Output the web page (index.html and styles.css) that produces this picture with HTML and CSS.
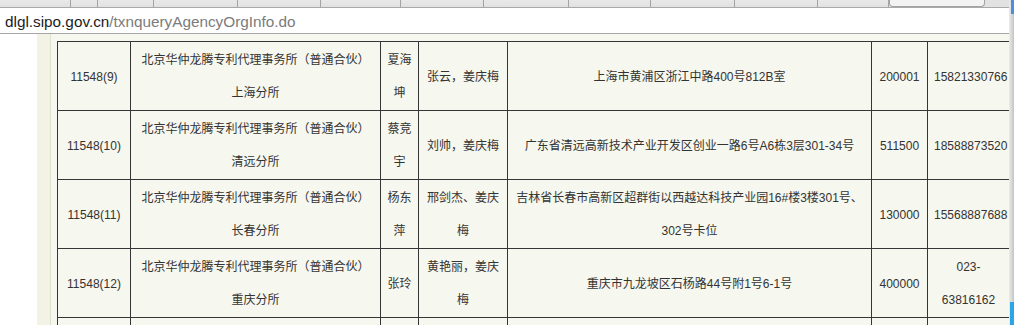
FILE: index.html
```html
<!DOCTYPE html>
<html lang="zh-CN">
<head>
<meta charset="utf-8">
<title>txnqueryAgencyOrgInfo</title>
<link rel="stylesheet" href="styles.css">
</head>
<body>
<div class="tabs">
  <div class="tab t1"></div>
  <div class="tab t2"></div>
  <div class="tab t3"></div>
  <div class="tab t4"></div>
  <div class="tab t5"></div>
  <div class="tab t6"></div>
  <div class="tab t7"></div>
  <div class="tab t8"></div>
  <div class="tab t9"></div>
  <div class="tab t10"></div>
  <div class="tab t11"></div>
  <div class="tab t12"></div>
  <div class="tab-active"></div>
  <div class="tab-rest"></div>
</div>
<div class="addr"><span class="host">dlgl.sipo.gov.cn</span><span class="path">/txnqueryAgencyOrgInfo.do</span></div>
<div class="page">
  <div class="gutter"></div>
  <div class="strip"></div>
  <div class="content">
    <table class="grid">
      <colgroup>
        <col class="c-no">
        <col class="c-name">
        <col class="c-head">
        <col class="c-agent">
        <col class="c-addr">
        <col class="c-zip">
        <col class="c-tel">
      </colgroup>
      <tbody>
        <tr>
          <td>11548(9)</td>
          <td>北京华仲龙腾专利代理事务所（普通合伙）<br>上海分所</td>
          <td>夏海坤</td>
          <td>张云，姜庆梅</td>
          <td>上海市黄浦区浙江中路400号812B室</td>
          <td>200001</td>
          <td>15821330766</td>
        </tr>
        <tr>
          <td>11548(10)</td>
          <td>北京华仲龙腾专利代理事务所（普通合伙）<br>清远分所</td>
          <td>蔡竞宇</td>
          <td>刘帅，姜庆梅</td>
          <td>广东省清远高新技术产业开发区创业一路6号A6栋3层301-34号</td>
          <td>511500</td>
          <td>18588873520</td>
        </tr>
        <tr>
          <td>11548(11)</td>
          <td>北京华仲龙腾专利代理事务所（普通合伙）<br>长春分所</td>
          <td>杨东萍</td>
          <td>邢剑杰、姜庆梅</td>
          <td>吉林省长春市高新区超群街以西越达科技产业园16#楼3楼301号、302号卡位</td>
          <td>130000</td>
          <td>15568887688</td>
        </tr>
        <tr>
          <td>11548(12)</td>
          <td>北京华仲龙腾专利代理事务所（普通合伙）<br>重庆分所</td>
          <td>张玲</td>
          <td>黄艳丽，姜庆梅</td>
          <td>重庆市九龙坡区石杨路44号附1号6-1号</td>
          <td>400000</td>
          <td>023-<wbr>63816162</td>
        </tr>
        <tr>
          <td>&nbsp;<br>&nbsp;</td>
          <td>&nbsp;<br>&nbsp;</td>
          <td>&nbsp;</td>
          <td>&nbsp;</td>
          <td>&nbsp;</td>
          <td>&nbsp;</td>
          <td>&nbsp;</td>
        </tr>
      </tbody>
    </table>
  </div>
</div>
<div class="edge"></div>
<div class="blue-top"></div>
<div class="blue-bottom"></div>
</body>
</html>
```
FILE: styles.css
```css
html, body {
  margin: 0;
  padding: 0;
}
body {
  width: 1014px;
  height: 325px;
  overflow: hidden;
  position: relative;
  background: #ffffff;
  font-family: "Liberation Sans", "Noto Sans CJK SC", sans-serif;
}

/* browser tab strip (bottom slice) */
.tabs {
  display: flex;
  height: 7px;
  background: #e4e4e4;
  border-bottom: 1px solid #a9a9a9;
}
.tab {
  height: 7px;
  border-right: 1px solid #a3a3a3;
  box-sizing: border-box;
  background: linear-gradient(#e9e9e9, #e1e1e1);
}
.t1 { width: 71px; }
.t2 { width: 27px; }
.t3 { width: 56px; }
.t4 { width: 84px; }
.t5 { width: 83px; }
.t6 { width: 80px; }
.t7 { width: 83px; }
.t8 { width: 85px; }
.t9 { width: 82px; }
.t10 { width: 84px; }
.t11 { width: 83px; }
.t12 { width: 71px; }
.tab-active {
  width: 96px;
  height: 7px;
  box-sizing: border-box;
  background: #f3f3f3;
  border: 1px solid #a3a3a3;
  border-top: none;
  border-radius: 0 0 4px 4px;
}
.tab-rest {
  flex: 1;
  height: 7px;
  background: #e2e2e2;
}

/* address bar */
.addr {
  height: 23px;
  padding: 2px 0 0 5px;
  line-height: 23px;
  font-size: 15.3px;
  background: #ffffff;
  border-bottom: 1px solid #a6a6a6;
  white-space: nowrap;
}
.host { color: #1b1b1b; }
.path { color: #7b7b7b; }

/* page area */
.page {
  display: flex;
  height: 291px;
  overflow: hidden;
}
.gutter {
  width: 37px;
  flex: none;
  background: #ffffff;
}
.strip {
  width: 13px;
  flex: none;
  background: #f2f3e4;
  border-right: 1px solid #e0e2d0;
}
.content {
  flex: none;
  padding: 7px 0 0 6px;
  background: #f6f7ee;
  width: 1000px;
  overflow: hidden;
}

.grid {
  border-collapse: collapse;
  table-layout: fixed;
  width: 952px;
  background: #f6f7ee;
}
.c-no { width: 73px; }
.c-name { width: 250px; }
.c-head { width: 38px; }
.c-agent { width: 89px; }
.c-addr { width: 364px; }
.c-zip { width: 56px; }
.c-tel { width: 82px; }

.grid td {
  border: 1px solid #353535;
  padding: 2px 6px 0 6px;
  font-size: 12px;
  line-height: 33px;
  color: #333333;
  text-align: center;
  vertical-align: middle;
}

/* window edge overlays */
.edge {
  position: absolute;
  top: 0;
  right: 0;
  width: 5px;
  height: 325px;
  background: linear-gradient(to right, #ececec, #c4c4c4);
}
.blue-top {
  position: absolute;
  top: 0;
  right: 0;
  width: 3px;
  height: 14px;
  background: #4a8fe0;
}
.blue-bottom {
  position: absolute;
  bottom: 0;
  right: 0;
  width: 4px;
  height: 23px;
  background: #2ca5e6;
}
```
